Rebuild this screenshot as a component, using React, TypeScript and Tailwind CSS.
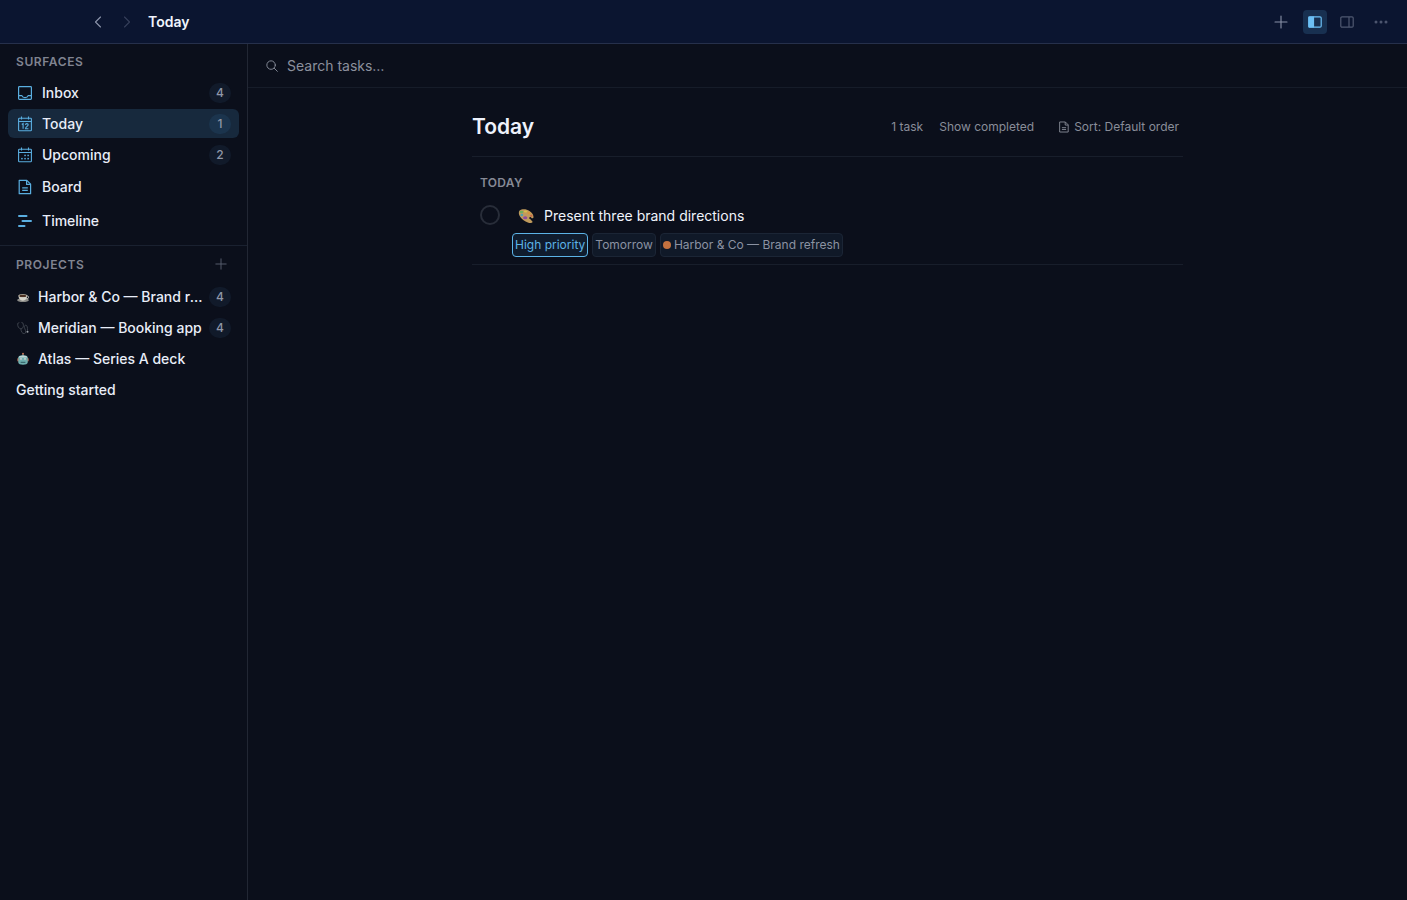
import type { ReactNode } from "react";

type Surface = {
  label: string;
  icon: ReactNode;
  count?: number;
  active?: boolean;
  tall?: boolean;
};

type Project = { label: string; icon?: ReactNode; count?: number };

function InboxIcon() {
  return (
    <svg viewBox="0 0 16 16" className="size-4" fill="none" stroke="currentColor" strokeWidth="1.2" aria-hidden="true">
      <rect x="1.6" y="1.6" width="12.8" height="12.8" rx="0.8" />
      <path d="M1.6 10.6h3.2c.5 1.3 1.7 2 3.2 2s2.7-.7 3.2-2h3.2" />
    </svg>
  );
}

function CalendarFrame({ children }: { children: ReactNode }) {
  return (
    <svg viewBox="0 0 16 16" className="size-4" fill="none" stroke="currentColor" strokeWidth="1.1" aria-hidden="true">
      <rect x="1.6" y="2.2" width="12.8" height="12.6" rx="0.8" />
      <path d="M1.6 5.5h12.8M4.5 0.6v3M11.5 0.6v3" />
      {children}
    </svg>
  );
}

function TodayIcon() {
  return (
    <CalendarFrame>
      <path d="M4.8 8.5l1.3-.9v5.2M8.5 8.9c0-.9.5-1.300 1.300-1.300s1.400.4 1.400 1.200c0 1.200-2.700 2.300-2.700 3.900h2.900" />
    </CalendarFrame>
  );
}

function UpcomingIcon() {
  return (
    <CalendarFrame>
      <g fill="currentColor" stroke="none">
        <rect x="7.3" y="7.7" width="1.5" height="1.5" />
        <rect x="10.4" y="7.7" width="1.5" height="1.5" />
        <rect x="4.2" y="10.9" width="1.5" height="1.5" />
        <rect x="7.3" y="10.9" width="1.5" height="1.5" />
        <rect x="10.4" y="10.9" width="1.5" height="1.5" />
      </g>
    </CalendarFrame>
  );
}

function DocumentIcon({ className }: { className: string }) {
  return (
    <svg viewBox="0 0 16 16" className={className} fill="none" stroke="currentColor" strokeWidth="1.2" aria-hidden="true">
      <path d="M2.2 1.3h7.600l3.800 3.800v9.600H2.200z" strokeLinejoin="round" />
      <path d="M9.600 1.400v4h4M5.200 8.900h5.600M5.200 11.300h5.600" />
    </svg>
  );
}

function TimelineIcon() {
  return (
    <svg viewBox="0 0 16 16" className="size-4" fill="none" stroke="currentColor" strokeWidth="2" strokeLinecap="round" aria-hidden="true">
      <path d="M2 3h7.500M5.500 8H14M2 13h5.500" />
    </svg>
  );
}

function CoffeeIcon() {
  return (
    <svg viewBox="0 0 14 14" className="size-3.5" aria-hidden="true">
      <ellipse cx="7" cy="10.2" rx="5.8" ry="1.9" fill="#8c8c88" />
      <circle cx="11" cy="7.3" r="1.5" fill="none" stroke="#c9c8c2" strokeWidth="0.9" />
      <path d="M2.5 5.600h8.600c0 3.200-1.700 5.200-4.300 5.200S2.500 8.800 2.500 5.600z" fill="#d6d4cc" />
      <ellipse cx="6.8" cy="5.7" rx="4.3" ry="1.7" fill="#b9b5a6" />
      <ellipse cx="6.8" cy="5.9" rx="3.4" ry="1.2" fill="#4b3023" />
    </svg>
  );
}

function StethoscopeIcon() {
  return (
    <svg viewBox="0 0 14 14" className="size-3.5" fill="none" stroke="#3f454f" strokeWidth="0.9" strokeLinecap="round" aria-hidden="true">
      <path d="M3 1.800l-1.300.6c-.3 2.900.9 5.100 3.200 5.500C7.400 7.500 8 5 7 2.100l-1.200-.5M4.900 7.900c.2 3 1.300 4.800 3.400 4.700 2-.1 1.500-2.900.6-4.700C8 6 8.400 4.300 9.700 4.200c1.700 0 1.900 2.800 1.800 5" />
      <circle cx="11.5" cy="10.8" r="1" fill="#9aa0a8" stroke="none" />
    </svg>
  );
}

function RobotIcon() {
  return (
    <svg viewBox="0 0 14 14" className="size-3.5" aria-hidden="true">
      <path d="M7 4V1.600" stroke="#b9c4c4" strokeWidth="0.8" />
      <circle cx="7" cy="1.7" r="0.9" fill="#d17855" />
      <rect x="1.3" y="6" width="11.4" height="3.6" rx="1" fill="#b66b55" />
      <path d="M2.300 5.500Q2.600 3.300 7 3.300t4.700 2.200v5.300q-.5 1.900-4.700 1.900t-4.700-1.900z" fill="#6faeae" />
      <path d="M2.600 5.400Q3 3.400 7 3.400t4.400 2z" fill="#c3d7d5" />
      <circle cx="5" cy="7" r="1.1" fill="#e6eeee" />
      <circle cx="9" cy="7" r="1.1" fill="#e6eeee" />
      <circle cx="5" cy="7" r="0.5" fill="#274a53" />
      <circle cx="9" cy="7" r="0.5" fill="#274a53" />
      <path d="M4.600 10.300h4.800" stroke="#2c5960" strokeWidth="1" />
    </svg>
  );
}

function PaletteIcon() {
  return (
    <svg viewBox="0 0 16 16" className="size-4" aria-hidden="true">
      <path d="M1.600 2.600C4 .7 8.500 1 11.500 3c2.800 1.900 4.200 4.200 4 6.200-.1 1-1 1.300-2.200.9-1.200-.3-1.500.4-.7 1.300 1.300 1.500 2.400 1.900 1.900 2.900-.6 1-3.100.7-4.700.1-3-1-5.700-2.800-7.500-5.400C.7 6.900.3 4 1.600 2.600z" fill="#c09a5c" />
      <ellipse cx="3.600" cy="4" rx="1.900" ry="1.200" fill="#6fae5c" />
      <ellipse cx="7.600" cy="3.500" rx="1.700" ry="1" fill="#d9bd4c" />
      <ellipse cx="11" cy="5.200" rx="1.600" ry="1.100" fill="#d8943d" />
      <ellipse cx="3.800" cy="7" rx="1.400" ry="1.200" fill="#4b9fb4" />
      <ellipse cx="7.200" cy="9.800" rx="2.100" ry="1.500" fill="#8d4a9f" />
      <ellipse cx="13.300" cy="7.700" rx="1.200" ry="1" fill="#c76544" />
      <circle cx="12.300" cy="10.100" r="1.100" fill="#101522" />
    </svg>
  );
}

function PlusIcon({ className }: { className: string }) {
  return (
    <svg viewBox="0 0 14 14" className={className} stroke="currentColor" strokeWidth="1.1" strokeLinecap="round" aria-hidden="true">
      <path d="M7 1v12M1 7h12" />
    </svg>
  );
}

function Chevron({ direction }: { direction: "left" | "right" }) {
  return (
    <svg viewBox="0 0 8 12" className="h-3 w-2" fill="none" stroke="currentColor" strokeWidth="1.1" strokeLinecap="round" strokeLinejoin="round" aria-hidden="true">
      <path d={direction === "left" ? "M6.500 1L1.500 6l5 5" : "M1.500 1l5 5-5 5"} />
    </svg>
  );
}

function PanelIcon({ side }: { side: "left" | "right" }) {
  return (
    <svg viewBox="0 0 14 12" className="h-3 w-3.5" fill="none" stroke="currentColor" strokeWidth="1.2" aria-hidden="true">
      <rect x="0.8" y="0.8" width="12.4" height="10.4" rx="1.2" />
      {side === "left" ? <path d="M1 1h4.500v10H1z" fill="currentColor" /> : <path d="M9 1v10" />}
    </svg>
  );
}

const surfaces: Surface[] = [
  { label: "Inbox", icon: <InboxIcon />, count: 4 },
  { label: "Today", icon: <TodayIcon />, count: 1, active: true },
  { label: "Upcoming", icon: <UpcomingIcon />, count: 2 },
  { label: "Board", icon: <DocumentIcon className="size-4" />, tall: true },
  { label: "Timeline", icon: <TimelineIcon />, tall: true },
];

const projects: Project[] = [
  { label: "Harbor & Co — Brand refresh", icon: <CoffeeIcon />, count: 4 },
  { label: "Meridian — Booking app", icon: <StethoscopeIcon />, count: 4 },
  { label: "Atlas — Series A deck", icon: <RobotIcon /> },
  { label: "Getting started" },
];

function Count({ value, active }: { value: number; active?: boolean }) {
  return (
    <span className={`flex h-5 w-[22px] shrink-0 items-center justify-center rounded-full text-xs text-[#8f97a8] ${active ? "bg-[#1b344d]" : "bg-[#111a2a]"}`}>
      {value}
    </span>
  );
}

function TitleBar() {
  return (
    <header className="flex h-11 shrink-0 items-center justify-between border-b border-[#26304b] bg-[#0b1530] pr-3 pl-[86px]">
      <div className="flex items-center gap-[5px]">
        <button type="button" aria-label="Back" className="flex size-6 items-center justify-center text-[#8d95ab]">
          <Chevron direction="left" />
        </button>
        <button type="button" aria-label="Forward" disabled className="flex size-6 items-center justify-center text-[#363f5a]">
          <Chevron direction="right" />
        </button>
        <p className="pl-1 text-sm font-semibold text-[#f0f4fd]">Today</p>
      </div>
      <div className="flex items-center gap-2">
        <button type="button" aria-label="New task" className="flex h-6 w-7 items-center justify-center text-[#8a92a8]">
          <PlusIcon className="size-3.5" />
        </button>
        <button type="button" aria-label="Toggle sidebar" aria-pressed="true" className="flex size-6 items-center justify-center rounded bg-[#183050] text-[#6cc0f5]">
          <PanelIcon side="left" />
        </button>
        <button type="button" aria-label="Toggle details" aria-pressed="false" className="flex size-6 items-center justify-center text-[#4f5870]">
          <PanelIcon side="right" />
        </button>
        <button type="button" aria-label="More" className="flex h-6 w-7 items-center justify-center text-[#4c556e]">
          <svg viewBox="0 0 14 4" className="h-1 w-3.5" fill="currentColor" aria-hidden="true">
            <circle cx="2" cy="2" r="1.5" />
            <circle cx="7" cy="2" r="1.5" />
            <circle cx="12" cy="2" r="1.5" />
          </svg>
        </button>
      </div>
    </header>
  );
}

function Sidebar() {
  return (
    <aside className="w-62 shrink-0 border-r border-[#222734] text-sm font-medium text-[#e8edf8]">
      <nav aria-label="Surfaces" className="border-b border-[#1a2130] px-2 pb-2">
        <h2 className="flex h-[34px] items-center px-2 pt-0.5 text-xs font-semibold tracking-wider text-[#808491]">SURFACES</h2>
        <ul className="flex flex-col gap-0.5">
          {surfaces.map((s) => (
            <li key={s.label}>
              <a
                href="#"
                aria-current={s.active ? "page" : undefined}
                className={`flex items-center gap-2 rounded-md px-2 ${s.tall ? "h-8" : "h-[29px]"} ${s.active ? "bg-[#17293d]" : ""}`}
              >
                <span className="flex w-[18px] justify-center text-[#5aaee0]">{s.icon}</span>
                <span className="grow">{s.label}</span>
                {s.count !== undefined && <Count value={s.count} active={s.active} />}
              </a>
            </li>
          ))}
        </ul>
      </nav>
      <nav aria-label="Projects" className="px-2">
        <div className="flex h-9 items-center justify-between pr-3 pl-2">
          <h2 className="pt-0.5 text-xs font-semibold tracking-wider text-[#808491]">PROJECTS</h2>
          <button type="button" aria-label="Add project" className="text-[#596070]">
            <PlusIcon className="size-3" />
          </button>
        </div>
        <ul className="flex flex-col gap-0.5">
          {projects.map((p) => (
            <li key={p.label}>
              <a href="#" className="flex h-[29px] items-center gap-0.5 rounded-md px-2">
                {p.icon && <span className="w-5 shrink-0">{p.icon}</span>}
                <span className="min-w-0 grow truncate">{p.label}</span>
                {p.count !== undefined && <Count value={p.count} />}
              </a>
            </li>
          ))}
        </ul>
      </nav>
    </aside>
  );
}

function TaskRow() {
  return (
    <li className="flex gap-3 border-b border-[#181e2b] px-2 pt-3.5 pb-[7px]">
      <input
        id="task-brand"
        type="checkbox"
        className="size-5 shrink-0 appearance-none rounded-full border-2 border-[#282d39]"
      />
      <div>
        <label htmlFor="task-brand" className="flex h-[22px] items-center gap-2.5 pl-1.5 text-sm text-[#f0f4fb]">
          <PaletteIcon />
          Present three brand directions
        </label>
        <div className="mt-1.5 flex gap-1 text-xs text-[#8b92a2]">
          <span className="flex h-6 items-center rounded border border-[#5cb3e6] bg-[#101c2d] px-0.5 text-[#5cb3e6]">High priority</span>
          <span className="flex h-6 items-center rounded border border-[#1b2535] bg-[#101928] px-0.5">Tomorrow</span>
          <span className="flex h-6 items-center gap-[3px] rounded border border-[#1b2535] bg-[#101928] px-0.5">
            <span className="size-2 rounded-full bg-[#c4713f]" />
            Harbor &amp; Co — Brand refresh
          </span>
        </div>
      </div>
    </li>
  );
}

export default function App() {
  return (
    <div className="flex min-h-screen flex-col bg-[#0b0f1b] font-['Inter','Liberation_Sans',sans-serif]">
      <TitleBar />
      <div className="flex grow">
        <Sidebar />
        <main className="min-w-0 grow">
          <label className="flex h-11 items-center gap-[9px] border-b border-[#161c29] px-[18px] text-[#8b909d]">
            <svg viewBox="0 0 13 13" className="size-3 shrink-0" fill="none" stroke="currentColor" strokeLinecap="round" aria-label="Search">
              <circle cx="5.5" cy="5.5" r="4.6" />
              <path d="M9 9l3.300 3.300" />
            </svg>
            <input type="search" placeholder="Search tasks…" className="grow bg-transparent text-sm outline-none placeholder:text-[#8b909d]" />
          </label>
          <section className="mx-auto max-w-[711px] pt-2">
            <div className="flex h-[61px] items-center justify-between border-b border-[#181e2b] pt-0.5 pr-1">
              <h1 className="text-[21px] font-semibold text-[#eef2fc]">Today</h1>
              <div className="flex items-center text-xs text-[#898d99]">
                <span>1 task</span>
                <button type="button" className="ml-4">Show completed</button>
                <button type="button" className="ml-6 flex items-center gap-1">
                  <DocumentIcon className="size-3" />
                  Sort: Default order
                </button>
              </div>
            </div>
            <h2 className="px-2 pt-[18px] text-xs font-semibold tracking-wide text-[#858995]">TODAY</h2>
            <ul>
              <TaskRow />
            </ul>
          </section>
        </main>
      </div>
    </div>
  );
}
